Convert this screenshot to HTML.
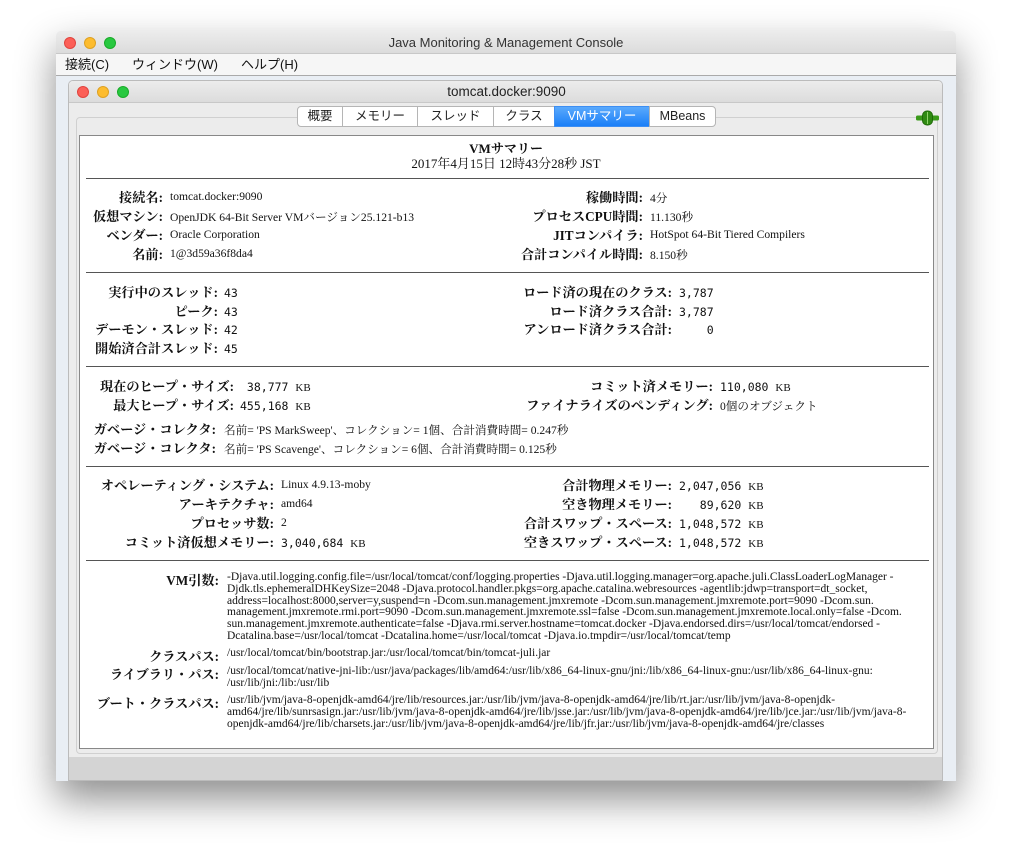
<!DOCTYPE html>
<html><head><meta charset="utf-8"><style>
*{margin:0;padding:0;box-sizing:border-box}
body{width:1012px;height:862px;background:#fff;position:relative;overflow:hidden;font-family:"Liberation Serif","Noto Serif CJK SC",serif;color:#111}
.a{position:absolute;white-space:nowrap}
.win{position:absolute;left:56px;top:31px;width:900px;height:750px;background:#e9eef4;box-shadow:0 18px 40px rgba(0,0,0,.45);border-radius:5px 5px 0 0;overflow:hidden}
.tb{position:absolute;left:0;top:0;width:900px;height:23px;background:linear-gradient(#ececec,#dcdcdc);border-bottom:1px solid #c8c8c8;font-family:"Liberation Sans","Noto Sans CJK JP",sans-serif;font-size:13px;text-align:center;line-height:23px;color:#333}
.dot{position:absolute;width:12px;height:12px;border-radius:50%;top:6px}
.menu{position:absolute;left:0;top:23px;width:900px;height:22px;background:#f6f6f6;border-bottom:1px solid #aaa;font-family:"Liberation Sans","Noto Sans CJK JP",sans-serif;font-size:13px;line-height:21px}
.iw{position:absolute;left:12px;top:49px;width:875px;height:701px;background:#ececec;border:1px solid #bbb;border-radius:5px 5px 0 0;overflow:hidden}
.tab{position:absolute;top:106px;height:21px;border:1px solid #b5b5b5;background:#fff;font-family:"Liberation Sans","Noto Sans CJK JP",sans-serif;font-size:12.5px;text-align:center;line-height:19px;color:#222}
.L{font-weight:bold;font-size:13.2px;text-align:right;margin-top:-1px}
.V{font-size:11.6px;margin-top:1px}
.M{font-family:"DejaVu Sans Mono","Liberation Mono",monospace;font-size:11.5px;margin-top:2px}
.k{font-family:"Liberation Serif",serif;font-size:11px}
.hr{position:absolute;left:86px;width:843px;height:1px;background:#555}
.t{font-size:11.5px;line-height:11.8px;white-space:normal;width:700px}
</style></head><body>
<div class="win">
 <div class="tb">Java Monitoring &amp; Management Console
  <div class="dot" style="left:8px;background:#fc5f57;border:1px solid #e0443e"></div>
  <div class="dot" style="left:28px;background:#fdbc2e;border:1px solid #dea123"></div>
  <div class="dot" style="left:48px;background:#28c840;border:1px solid #1aab29"></div>
 </div>
 <div class="menu"><span class="a" style="left:9px">接続(C)</span><span class="a" style="left:76px">ウィンドウ(W)</span><span class="a" style="left:185px">ヘルプ(H)</span></div>
 <div class="iw">
  <div class="tb" style="width:875px;height:22px;line-height:22px;font-size:13.5px;color:#222">tomcat.docker:9090
   <div class="dot" style="left:8px;top:5px;background:#fc5f57;border:1px solid #e0443e"></div>
   <div class="dot" style="left:28px;top:5px;background:#fdbc2e;border:1px solid #dea123"></div>
   <div class="dot" style="left:48px;top:5px;background:#28c840;border:1px solid #1aab29"></div>
  </div>
  <div style="position:absolute;left:0;top:676px;width:875px;height:25px;background:#d4d4d4"></div>
 </div>
</div>
<div class="a" style="left:76px;top:117px;width:862px;height:637px;border:1px solid #d0d0d0;border-radius:4px"></div>
<div class="a" style="left:79px;top:135px;width:855px;height:614px;background:#fff;border:1px solid #888"></div>
<div class="tab" style="left:297px;width:46px;border-radius:4px 0 0 4px">概要</div>
<div class="tab" style="left:342px;width:76px">メモリー</div>
<div class="tab" style="left:417px;width:77px">スレッド</div>
<div class="tab" style="left:493px;width:62px">クラス</div>
<div class="tab" style="left:554px;width:96px;background:linear-gradient(#5aa9fc,#1a7ff8);color:#fff;border-color:#3d8ef2">VMサマリー</div>
<div class="tab" style="left:649px;width:67px;border-radius:0 4px 4px 0">MBeans</div>
<svg class="a" style="left:915px;top:110px" width="25" height="16"><rect x="1" y="5.5" width="23" height="5" rx="1.5" fill="#3a9a1a"/><rect x="7.5" y="1" width="10" height="14" rx="4.5" fill="#2f8a12" stroke="#1f6a08"/><line x1="12.5" y1="2" x2="12.5" y2="14" stroke="#8fd46a"/></svg>

<div class="a" style="left:0;width:1012px;text-align:center;top:138px;font-weight:bold;font-size:13px">VMサマリー</div>
<div class="a" style="left:0;width:1012px;text-align:center;top:153px;font-size:13px">2017年4月15日 12時43分28秒 JST</div>
<div class="hr" style="top:178px"></div>

<div class="a L" style="right:849px;top:188px">接続名:</div><div class="a V" style="left:170px;top:189px">tomcat.docker:9090</div>
<div class="a L" style="right:849px;top:207px">仮想マシン:</div><div class="a V" style="left:170px;top:208px">OpenJDK 64-Bit Server VMバージョン25.121-b13</div>
<div class="a L" style="right:849px;top:226px">ベンダー:</div><div class="a V" style="left:170px;top:227px">Oracle Corporation</div>
<div class="a L" style="right:849px;top:245px">名前:</div><div class="a V" style="left:170px;top:246px">1@3d59a36f8da4</div>
<div class="a L" style="right:369px;top:188px">稼働時間:</div><div class="a V" style="left:650px;top:189px">4分</div>
<div class="a L" style="right:369px;top:207px">プロセスCPU時間:</div><div class="a V" style="left:650px;top:208px">11.130秒</div>
<div class="a L" style="right:369px;top:226px">JITコンパイラ:</div><div class="a V" style="left:650px;top:227px">HotSpot 64-Bit Tiered Compilers</div>
<div class="a L" style="right:369px;top:245px">合計コンパイル時間:</div><div class="a V" style="left:650px;top:246px">8.150秒</div>
<div class="hr" style="top:272px"></div>

<div class="a L" style="right:794px;top:283px">実行中のスレッド:</div><div class="a M" style="left:224px;top:284px">43</div>
<div class="a L" style="right:794px;top:302px">ピーク:</div><div class="a M" style="left:224px;top:303px">43</div>
<div class="a L" style="right:794px;top:320px">デーモン・スレッド:</div><div class="a M" style="left:224px;top:321px">42</div>
<div class="a L" style="right:794px;top:339px">開始済合計スレッド:</div><div class="a M" style="left:224px;top:340px">45</div>
<div class="a L" style="right:340px;top:283px">ロード済の現在のクラス:</div><div class="a M" style="left:679px;top:284px">3,787</div>
<div class="a L" style="right:340px;top:302px">ロード済クラス合計:</div><div class="a M" style="left:679px;top:303px">3,787</div>
<div class="a L" style="right:340px;top:320px">アンロード済クラス合計:</div><div class="a M" style="left:679px;top:321px">&nbsp;&nbsp;&nbsp;&nbsp;0</div>
<div class="hr" style="top:366px"></div>

<div class="a L" style="right:778px;top:377px">現在のヒープ・サイズ:</div><div class="a M" style="left:240px;top:378px">&nbsp;38,777 <span class="k">KB</span></div>
<div class="a L" style="right:778px;top:396px">最大ヒープ・サイズ:</div><div class="a M" style="left:240px;top:397px">455,168 <span class="k">KB</span></div>
<div class="a L" style="right:299px;top:377px">コミット済メモリー:</div><div class="a M" style="left:720px;top:378px">110,080 <span class="k">KB</span></div>
<div class="a L" style="right:299px;top:396px">ファイナライズのペンディング:</div><div class="a V" style="left:720px;top:397px">0個のオブジェクト</div>
<div class="a L" style="right:796px;top:420px">ガベージ・コレクタ:</div><div class="a V" style="left:224px;top:421px">名前= 'PS MarkSweep'、コレクション= 1個、合計消費時間= 0.247秒</div>
<div class="a L" style="right:796px;top:439px">ガベージ・コレクタ:</div><div class="a V" style="left:224px;top:440px">名前= 'PS Scavenge'、コレクション= 6個、合計消費時間= 0.125秒</div>
<div class="hr" style="top:466px"></div>

<div class="a L" style="right:738px;top:476px">オペレーティング・システム:</div><div class="a V" style="left:281px;top:477px">Linux 4.9.13-moby</div>
<div class="a L" style="right:738px;top:495px">アーキテクチャ:</div><div class="a V" style="left:281px;top:496px">amd64</div>
<div class="a L" style="right:738px;top:514px">プロセッサ数:</div><div class="a V" style="left:281px;top:515px">2</div>
<div class="a L" style="right:738px;top:533px">コミット済仮想メモリー:</div><div class="a M" style="left:281px;top:534px">3,040,684 <span class="k">KB</span></div>
<div class="a L" style="right:340px;top:476px">合計物理メモリー:</div><div class="a M" style="left:679px;top:477px">2,047,056 <span class="k">KB</span></div>
<div class="a L" style="right:340px;top:495px">空き物理メモリー:</div><div class="a M" style="left:679px;top:496px">&nbsp;&nbsp;&nbsp;89,620 <span class="k">KB</span></div>
<div class="a L" style="right:340px;top:514px">合計スワップ・スペース:</div><div class="a M" style="left:679px;top:515px">1,048,572 <span class="k">KB</span></div>
<div class="a L" style="right:340px;top:533px">空きスワップ・スペース:</div><div class="a M" style="left:679px;top:534px">1,048,572 <span class="k">KB</span></div>
<div class="hr" style="top:560px"></div>

<div class="a L" style="right:793px;top:571px">VM引数:</div>
<div class="a t" style="left:227px;top:572px">-Djava.util.logging.config.file=/usr/local/tomcat/conf/logging.properties -Djava.util.logging.manager=org.apache.juli.ClassLoaderLogManager -<br>Djdk.tls.ephemeralDHKeySize=2048 -Djava.protocol.handler.pkgs=org.apache.catalina.webresources -agentlib:jdwp=transport=dt_socket,<br>address=localhost:8000,server=y,suspend=n -Dcom.sun.management.jmxremote -Dcom.sun.management.jmxremote.port=9090 -Dcom.sun.<br>management.jmxremote.rmi.port=9090 -Dcom.sun.management.jmxremote.ssl=false -Dcom.sun.management.jmxremote.local.only=false -Dcom.<br>sun.management.jmxremote.authenticate=false -Djava.rmi.server.hostname=tomcat.docker -Djava.endorsed.dirs=/usr/local/tomcat/endorsed -<br>Dcatalina.base=/usr/local/tomcat -Dcatalina.home=/usr/local/tomcat -Djava.io.tmpdir=/usr/local/tomcat/temp</div>
<div class="a L" style="right:793px;top:647px">クラスパス:</div>
<div class="a t" style="left:227px;top:648px">/usr/local/tomcat/bin/bootstrap.jar:/usr/local/tomcat/bin/tomcat-juli.jar</div>
<div class="a L" style="right:793px;top:665px">ライブラリ・パス:</div>
<div class="a t" style="left:227px;top:666px">/usr/local/tomcat/native-jni-lib:/usr/java/packages/lib/amd64:/usr/lib/x86_64-linux-gnu/jni:/lib/x86_64-linux-gnu:/usr/lib/x86_64-linux-gnu:<br>/usr/lib/jni:/lib:/usr/lib</div>
<div class="a L" style="right:793px;top:694px">ブート・クラスパス:</div>
<div class="a t" style="left:227px;top:695px">/usr/lib/jvm/java-8-openjdk-amd64/jre/lib/resources.jar:/usr/lib/jvm/java-8-openjdk-amd64/jre/lib/rt.jar:/usr/lib/jvm/java-8-openjdk-<br>amd64/jre/lib/sunrsasign.jar:/usr/lib/jvm/java-8-openjdk-amd64/jre/lib/jsse.jar:/usr/lib/jvm/java-8-openjdk-amd64/jre/lib/jce.jar:/usr/lib/jvm/java-8-<br>openjdk-amd64/jre/lib/charsets.jar:/usr/lib/jvm/java-8-openjdk-amd64/jre/lib/jfr.jar:/usr/lib/jvm/java-8-openjdk-amd64/jre/classes</div>
</body></html>
